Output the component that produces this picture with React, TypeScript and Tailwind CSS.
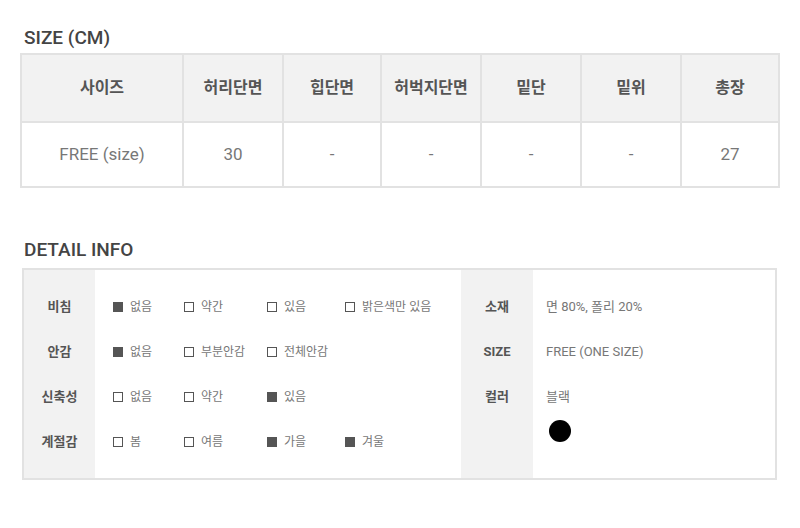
const font = { fontFamily: 'Roboto, "Noto Sans CJK KR", "Noto Sans", sans-serif' };

const sizeHeads = ["사이즈", "허리단면", "힙단면", "허벅지단면", "밑단", "밑위", "총장"];
const sizeVals = ["FREE (size)", "30", "-", "-", "-", "-", "27"];
const widths = ["w-[162px]", "w-[100px]", "w-[98px]", "w-[100px]", "w-[100px]", "w-[100px]", "w-[98px]"];

const details: { label: string; opts: [string, boolean][] }[] = [
  { label: "비침", opts: [["없음", true], ["약간", false], ["있음", false], ["밝은색만 있음", false]] },
  { label: "안감", opts: [["없음", true], ["부분안감", false], ["전체안감", false]] },
  { label: "신축성", opts: [["없음", false], ["약간", false], ["있음", true]] },
  { label: "계절감", opts: [["봄", false], ["여름", false], ["가을", true], ["겨울", true]] },
];

const optW = ["w-[71px]", "w-[83px]", "w-[78px]", "w-[100px]"];

function Box({ on }: { on: boolean }) {
  return (
    <span
      className={
        on
          ? "inline-block h-[10px] w-[10px] bg-[#555]"
          : "inline-block h-[10px] w-[10px] border-[1.5px] border-[#555] bg-white"
      }
    />
  );
}

export default function App() {
  return (
    <div className="h-[528px] w-[800px] bg-white text-[#555]" style={font}>
      <h2 className="pl-[24px] pt-[27px] text-[19px] font-medium leading-[22px] text-[#444]">SIZE (CM)</h2>
      <table className="ml-[20px] mt-[4px] border-collapse">
        <tbody>
          <tr className="h-[68px] bg-[#f2f2f2]">
            {sizeHeads.map((h, i) => (
              <td
                key={h}
                className={`${widths[i]} border-2 border-[#e2e2e2] text-center text-[16px] font-bold text-[#555]`}
              >
                {h}
              </td>
            ))}
          </tr>
          <tr className="h-[65px]">
            {sizeVals.map((v, i) => (
              <td
                key={i}
                className={`${widths[i]} border-2 border-[#e2e2e2] text-center text-[17px] text-[#777]`}
              >
                {v}
              </td>
            ))}
          </tr>
        </tbody>
      </table>

      <h2 className="pl-[24px] pt-[51px] text-[19px] font-medium leading-[22px] text-[#444]">DETAIL INFO</h2>
      <div className="ml-[22px] mt-[7px] flex h-[212px] w-[755px] border-2 border-[#e2e2e2]">
        <div className="flex w-[437px]">
          <div className="flex w-[71px] flex-col bg-[#f2f2f2] pt-[14px]">
            {details.map((d) => (
              <div key={d.label} className="flex h-[45px] items-center justify-center text-[13px] font-bold text-[#555]">
                {d.label}
              </div>
            ))}
          </div>
          <div className="flex flex-1 flex-col pl-[18px] pt-[14px]">
            {details.map((d) => (
              <div key={d.label} className="flex h-[45px] items-center">
                {d.opts.map(([t, on], i) => (
                  <div key={t} className={`${optW[i]} flex items-center gap-[7px] text-[12px] text-[#777]`}>
                    <Box on={on} />
                    <span>{t}</span>
                  </div>
                ))}
              </div>
            ))}
          </div>
        </div>
        <div className="flex flex-1">
          <div className="flex w-[72px] flex-col bg-[#f2f2f2] pt-[14px]">
            {["소재", "SIZE", "컬러"].map((l) => (
              <div key={l} className="flex h-[45px] items-center justify-center text-[13px] font-bold text-[#555]">
                {l}
              </div>
            ))}
          </div>
          <div className="flex flex-1 flex-col pl-[13px] pt-[14px] text-[13px] text-[#777]">
            <div className="flex h-[45px] items-center">면 80%, 폴리 20%</div>
            <div className="flex h-[45px] items-center">FREE (ONE SIZE)</div>
            <div className="flex h-[45px] items-center">블랙</div>
            <span className="ml-[3px] mt-[1px] block h-[22px] w-[22px] rounded-full bg-black" />
          </div>
        </div>
      </div>
    </div>
  );
}
